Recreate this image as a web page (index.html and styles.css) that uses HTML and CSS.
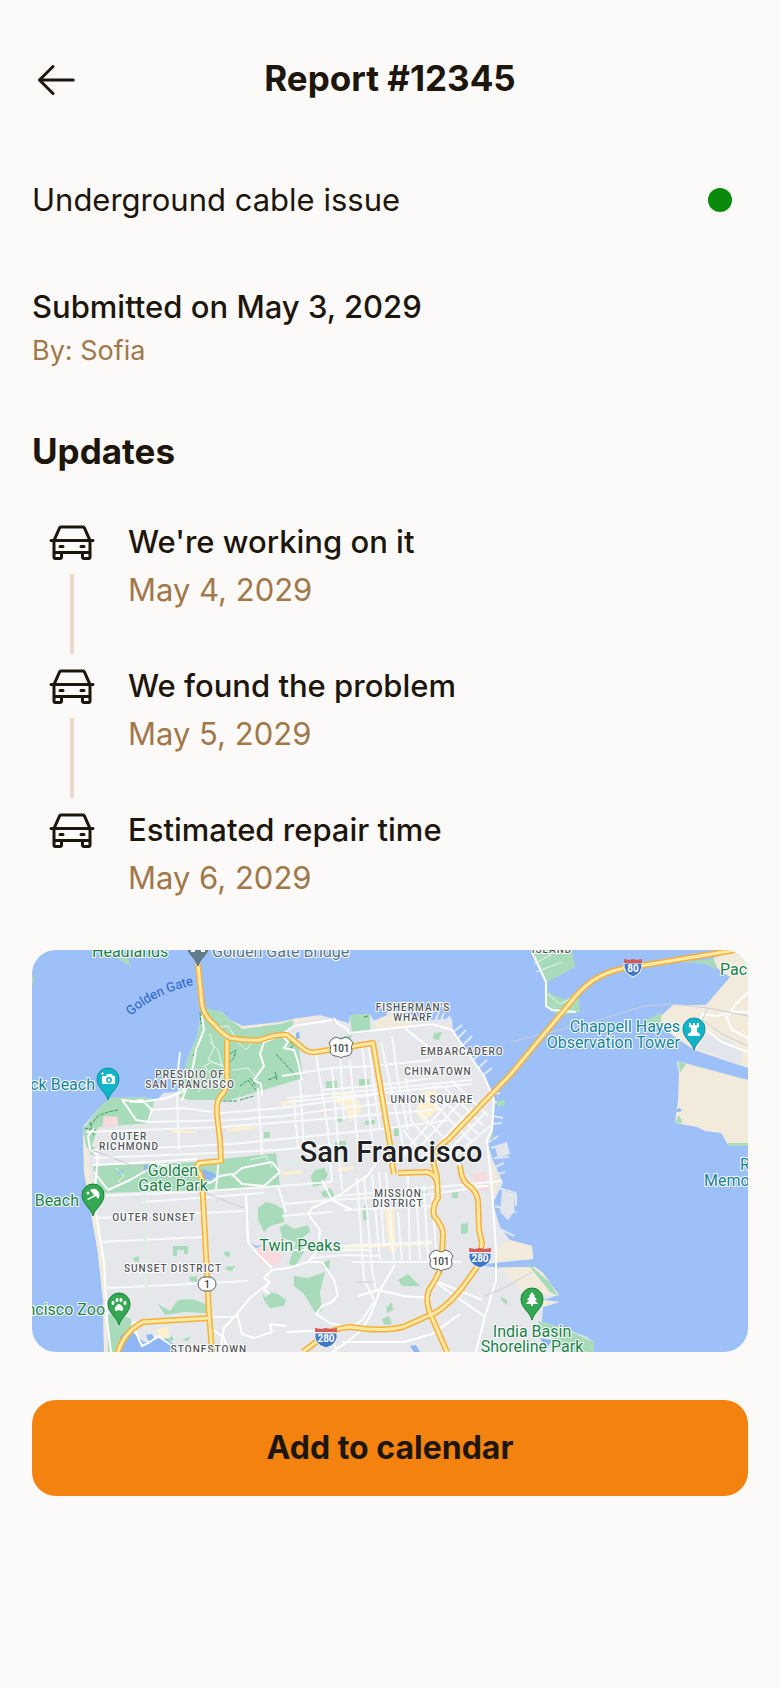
FILE: index.html
```html
<!DOCTYPE html>
<html lang="en">
<head>
<meta charset="utf-8">
<meta name="viewport" content="width=device-width, initial-scale=1">
<title>Report #12345</title>
<link rel="stylesheet" href="styles.css">
</head>
<body>
<svg class="sprite" aria-hidden="true">
  <symbol id="car" viewBox="0 0 256 256">
    <path d="M240,112H229.2L201.42,49.5A16,16,0,0,0,186.8,40H69.2a16,16,0,0,0-14.62,9.5L26.8,112H16a8,8,0,0,0,0,16h8v80a16,16,0,0,0,16,16H64a16,16,0,0,0,16-16V192h96v16a16,16,0,0,0,16,16h24a16,16,0,0,0,16-16V128h8a8,8,0,0,0,0-16ZM69.2,56H186.8l24.89,56H44.31ZM64,208H40V192H64Zm128,0V192h24v16Zm24-32H40V128H216ZM56,152a8,8,0,0,1,8-8H80a8,8,0,0,1,0,16H64A8,8,0,0,1,56,152Zm112,0a8,8,0,0,1,8-8h16a8,8,0,0,1,0,16H176A8,8,0,0,1,168,152Z"/>
  </symbol>
</svg>

<header class="topbar">
  <button class="back" type="button" aria-label="Back">
    <svg class="icon" viewBox="0 0 256 256" aria-hidden="true"><path class="arrow" d="M220 128H40M112 56 40 128l72 72"/></svg>
  </button>
  <h1 class="title">Report #12345</h1>
</header>

<main class="report">
  <section class="issue">
    <p class="lead">Underground cable issue</p>
    <span class="status" role="img" aria-label="Active"></span>
  </section>

  <section class="submitted">
    <p class="lead strong">Submitted on May 3, 2029</p>
    <p class="by">By: Sofia</p>
  </section>

  <h2 class="heading">Updates</h2>
  <ol class="timeline">
    <li class="step">
      <div class="rail"><svg class="icon" aria-hidden="true"><use href="#car"/></svg><span class="line"></span></div>
      <div class="detail"><p class="what">We're working on it</p><p class="when">May 4, 2029</p></div>
    </li>
    <li class="step">
      <div class="rail"><svg class="icon" aria-hidden="true"><use href="#car"/></svg><span class="line"></span></div>
      <div class="detail"><p class="what">We found the problem</p><p class="when">May 5, 2029</p></div>
    </li>
    <li class="step">
      <div class="rail"><svg class="icon" aria-hidden="true"><use href="#car"/></svg></div>
      <div class="detail"><p class="what">Estimated repair time</p><p class="when">May 6, 2029</p></div>
    </li>
  </ol>

  <svg class="map" viewBox="0 0 716 402" role="img" aria-label="Map of San Francisco">
    <rect class="water" width="716" height="402"/>

    <!-- Land -->
    <path class="land" d="M170 58 190 62 198 70 211 78 248 73 261 69 288 65 306 70 317 73 318 65 338 64 342 71 353 69 356 60 401 70 420 68 421 80 458 137 463 150 461 177 456 195 461 210 471 233 461 253 468 277 478 290 500 296 501 309 465 313 465 317 503 317 511 323 518 333 527 345 511 350 527 352 511 357 510 372 531 378 555 387 562 392V402H72L71 350 66 303 58 257 53 223 51 177 65 160 78 148 111 147 125 150 131 143 145 142 153 120 155 110 165 87Z"/>
    <path class="sand" d="M51 186 55 186 61 250 72 310 76 402H72L71 350 66 303 58 257 52 223ZM478 290 500 296 501 309 465 311 462 300ZM468 317H503L511 323 518 333 527 345 506 346 488 340ZM198 70 211 76 248 72 261 69 288 66 288 69 262 73 212 80 202 74ZM341 71 353 66 384 70 376 78 346 80ZM459 212 468 230 460 250 457 232ZM511 350 527 352 511 357Z"/>
    <path class="sand" d="M681 8 700 2 716 0V118L662 100 630 78 611 72 630 65 641 55 674 55 698 27 685 18ZM645 111 716 130V195H696L689 183 673 181 665 177 643 173 646 150 647 123Z"/>
    <path class="grey-land" d="M665 98 676 82 700 92 712 104 706 114Z"/>

    <!-- Piers -->
    <path class="pier" d="M403 72 407 62M408 72 412 63M414 72 418 66M421 82 430 75M425 89 434 80M430 96 440 86M435 104 446 95M440 111 450 102M446 118 455 110M451 125 460 118M462 144 468 143M462 152 470 153M461 166 471 168M460 174 470 173M457 192 466 186M459 198 472 194M462 208 477 207M463 217 472 213M462 225 473 222M466 238 484 243M484 243V256M472 245 474 262M477 246 478 262M463 256 484 262M470 280 482 286"/>
    <path class="grey-land" d="M463 197 475 192 478 204 466 208ZM470 240 483 244 482 262 476 270 468 262Z"/>
    <path class="inlet" d="M448 315 470 313 502 310V316L465 317ZM438 199 428 216"/>

    <!-- Parks -->
    <path class="park" d="M170 58 190 62 198 70 211 79 248 74 260 70 262 74 252 84 266 92 271 128 238 138 198 150 158 150 147 147 153 120 155 110 165 87ZM65 160 78 148 111 147 122 150 118 173 66 177 60 196 66 200 60 206 54 196 51 180ZM61 216 165 212 244 203 248 236 178 240 65 243ZM318 65 338 64V82L320 84ZM0 0H12L3 8 0 12ZM85 8 95 6 99 17ZM0 24 2 28V32L0 34ZM498 0H540L543 17 516 32ZM515 42 534 50 546 40 548 62 528 66 513 57ZM611 72 630 62 628 76ZM646 111 654 114 648 123ZM643 173 647 165 651 173ZM649 12 682 9 684 20 674 14ZM696 193H716V196H696ZM494 312 506 322 518 333 526 346 518 342ZM506 371 531 378 562 392V402H530L520 388 508 380ZM458 188 461 180 461 192ZM402 83 410 82 407 90 401 89ZM465 151 473 150 472 156 465 156Z"/>
    <path class="park" d="M294 131H305V138H294ZM327 129H337V137H327ZM305 166H310V172H305ZM333 171 343 170V174L333 175ZM232 182H238V188H232ZM303 192 314 191V196H303ZM362 178 367 178 367 186 362 186ZM308 87 320 85 318 90 308 91ZM283 220 292 218 296 224 291 234 281 237 279 226ZM289 242 298 238 302 244 301 248 291 247ZM226 258 234 252 242 254 251 259 252 272 238 276 232 282 226 270ZM248 277 254 274 262 279 276 275 278 282 270 288 272 302 262 318 257 313 264 292 250 288ZM262 326 276 328 293 322 288 342 290 360 284 364 272 344 262 336ZM292 312 298 310 297 319 291 318ZM335 259 336 250 331 258 331 270 335 270ZM420 243 426 242V248H420ZM429 274 436 273 436 283 429 284ZM390 241 395 241V245H390ZM366 330 376 324 386 334 388 336 370 336ZM354 358 360 352 361 360 355 363ZM350 369 357 366 360 374 352 375ZM468 347 475 350 475 355 470 351ZM141 296 156 296V304H152V300H145V306H141ZM192 302 198 301V307L193 306ZM193 317 203 316 200 321 195 320ZM101 308 107 306V312L102 311ZM157 327 165 326V332L158 331ZM126 354 138 361 146 350 160 349 174 354 176 363 152 362 133 365ZM76 364 98 368 102 380 90 398 84 402H76ZM150 390 159 386 156 391ZM130 390 140 386 142 390 130 394ZM238 342 246 344 254 350 252 356 238 358 232 350ZM230 344 238 350 234 354Z"/>
    <path class="pond" d="M170 219 180 222 185 226 178 230 170 228ZM112 216 116 214 116 220 112 220ZM88 386 98 380 112 392 120 392 130 386 146 397 138 402H88ZM114 385 120 384 124 392 118 394ZM217 292 224 296 230 295 224 298ZM264 83 267 82 268 88 264 89ZM378 396 384 395 388 402H382ZM84 220 92 222 88 224ZM508 388 520 390 514 400ZM644 160 648 158 650 161 645 162Z"/>
    <path class="pink" d="M72 166 86 167 86 176 70 176ZM222 300 234 294 250 306 246 316 228 312ZM438 224 454 222 456 242 448 240ZM424 236 430 228 434 234ZM315 126 319 125V130H315ZM288 160 296 158 295 164H288Z"/>
    <path class="commercial" d="M140 180 165 181V183H140ZM195 178 220 176 228 178 196 182ZM248 152 264 149 264 154 250 156ZM300 144 322 142 330 160 318 172 312 156 302 152ZM390 142 404 140 406 160 392 172 384 164ZM352 258 362 258 364 304 358 302ZM312 296 400 292V295L312 299ZM306 218 322 216V219L306 222ZM124 380 136 376 138 388 128 389ZM300 98 330 94V98L300 102ZM250 222 270 220V223L250 226ZM416 202 422 202V210H416Z"/>
    <path class="trail" d="M58 176 66 166 76 162 86 160M52 178 64 180M58 172 62 186M161 106 166 98M198 104 204 100 202 108 198 112M208 136 216 130 224 140M218 128 224 136M208 150 222 146M186 151 205 151M244 104 264 126M258 92 266 96M258 98 266 92M236 130 246 126M243 122 245 130M168 62 169 74M332 67 336 66"/>

    <!-- Streets -->
    <path class="street minor" d="M118 160 150 158 190 163 250 158 300 151 360 142 410 136M116 172 200 170 252 166 310 158 400 148M54 182 190 177 290 169 400 160M61 200 140 197 200 194 290 185 350 179 420 170M62 208 160 204 245 200 300 195M250 126 300 118 340 116 400 110M290 140 350 135 400 128M255 148 320 142 380 136 440 130M255 152 320 146 380 140 440 134M62 246 160 242 246 236 300 232M110 252 180 247 232 243M65 268 212 261M67 292 172 287M75 338 140 335 175 333 216 331M178 367 206 367M252 254 300 250 400 244 455 236M306 246 470 231M254 300 340 300M280 308 312 305 346 306M320 312H430M312 260 400 256M250 266 300 262M310 296 400 292"/>
    <path class="street minor" d="M145 142 147 200M226 138 230 205M268 130 272 200M284 104 296 180 300 232M262 152 266 198M308 103 312 170M300 118 305 180 310 240M318 110 326 200M330 94 340 190M336 93 348 180M349 92 360 142 372 200M360 86 366 130 376 180M374 128 380 176M325 228 332 330 342 350M332 226 340 320 344 340M340 224 348 310M347 222 352 296M354 222 362 310M376 226 378 310M384 236 388 310M392 236 396 310M400 246 404 300M366 262 370 310M148 102 146 120M246 236 254 262M184 240 187 206M214 243 216 293"/>
    <path class="street minor" d="M398 150 440 192M405 144 446 184M412 137 452 176M419 130 456 166M385 160 424 200M378 170 412 206M371 180 396 210M378 208 430 150M388 214 440 158M370 205 418 150M404 214 452 164M424 205 458 176M376 200 364 214"/>
    <path class="street" d="M62 178 56 186 58 200 66 205 62 250 72 312 75 370 79 402M61 215 120 212 165 209M98 152 110 150 120 160 116 172 104 170 96 158 90 150 110 152 135 148 150 142 152 138M230 146 229 134 222 130 232 116 228 104 232 92 250 85 256 92 252 98 262 100 266 112 270 130M318 83 400 74 420 80 452 126 462 150 460 180 455 190 460 240 464 300 464 330 452 370 444 402M302 68 306 74 314 78 318 83M250 84 262 76 300 70M371 77 390 92 406 104M347 210 335 226 306 246 280 258 276 264 288 280 286 300 276 312 256 318 240 320 232 328 238 332 218 348 205 364 192 378 188 402M214 243 216 292 226 304 240 318M276 312 290 312 302 330 306 345 300 352 290 356 284 364 298 373 320 378M238 332 232 340 238 344M363 315 348 340 340 362 330 380 312 394 300 402M326 346 346 340 372 346 400 348M400 330 452 366M406 332 450 350M316 380 330 370 342 352M205 364 210 384 222 388 240 382 238 374 254 376M254 382 300 380 304 402M310 392 372 392 400 384 428 364M320 260 300 250 290 230M62 222 76 240 98 230 112 222 126 214 165 220M158 238 180 232 188 226 200 224 210 234 232 236 248 222 240 212 210 218 200 226M182 380 192 388 196 402M104 372 100 374 110 396 118 392 126 386 146 400M428 216 416 202M456 236 430 236"/>
    <path class="street path" d="M112 238 114 320 116 380M252 214 290 208 312 204"/>
    <path class="street" d="M500 2 514 32 514 56 520 60 544 62M716 62 700 62 684 66 670 64 668 76 690 92 716 102M696 66 704 54 716 42M716 88 700 80 694 66"/>
    <path class="park-road" d="M178 84 182 98 176 110 190 116 186 100 178 92M196 118 180 112 172 116 184 130 194 126M200 120 216 118 226 130M206 92 214 100 222 90M182 78 196 76 204 88M166 142 182 128 194 134M502 14 520 4M504 22 530 12M516 44 528 54 540 48M84 218 92 226 86 232M218 210 234 206 240 218"/>
    <path class="rail-line" d="M478 92 560 72 612 56 640 54 676 58 716 66M676 58 670 70 690 84 716 96M452 346 472 338 500 322M60 200 212 258M324 332H342"/>
    <path class="street" d="M170 66 172 80 164 100 160 122 156 134 150 150"/>

    <!-- Highways -->
    <g class="casing">
      <path id="route-101-north" d="M166 14 170 55Q172 66 182 74 190 84 198 88 215 91 228 90 245 84 255 85L272 99Q276 103 284 102L341 93 359 200 361 216M366 223 395 222Q403 224 405 232M360 214 362 224"/>
      <path id="route-1" d="M195 90V130Q195 140 188 147 184 152 185 165L188 190 189 211 167 213Q163 218 168 224L170 230 175 323 177 363 180 402M178 368 111 372Q92 382 86 402"/>
      <path id="route-80" d="M710-2 698 1 601 17Q578 19 560 31 548 40 538 53L478 125 451 153 416 190Q400 200 402 215L405 227 406 248Q400 256 402 266 411 276 411 284L410 303 408 320Q404 330 397 340 393 350 398 363L415 402"/>
      <path id="route-280" d="M428 215Q429 230 436 235 444 240 446 250L447 280 450 293 445 317 430 338Q412 360 398 365L371 377Q350 382 318 377 300 378 288 389L271 402"/>
    </g>
    <g class="fill">
      <use href="#route-101-north"/>
      <use href="#route-1"/>
      <use href="#route-80"/>
      <use href="#route-280"/>
    </g>

    <!-- Route shields -->
    <g class="us-shield">
      <path id="us" d="M300 89 304 87 309 89 314 87 318 89 321 93Q318 97 320 100 320 105 315 106 311 106 309 108 307 106 303 106 298 105 298 100 300 97 297 93Z"/>
      <text x="309" y="102">101</text>
      <use href="#us" x="100" y="213"/>
      <text x="409" y="315">101</text>
      <rect x="166" y="327" width="18" height="14" rx="7"/>
      <text x="175" y="338">1</text>
    </g>
    <g class="interstate">
      <path class="blue" d="M592 13H610Q611 23 601 27 591 23 592 13Z"/><path class="red" d="M592 9 597 10 601 9 605 10 610 9V13H592Z"/>
      <text x="601" y="22">80</text>
      <path class="blue" d="M437 303H459Q461 314 448 318 435 314 437 303Z"/><path class="red" d="M437 298 443 299 448 298 453 299 459 298V302H437Z"/>
      <text x="448" y="312">280</text>
      <path class="blue" d="M283 383H305Q307 394 294 398 281 394 283 383Z"/><path class="red" d="M283 378 289 379 294 378 299 379 305 378V382H283Z"/>
      <text x="294" y="392">280</text>
    </g>

    <!-- Pins -->
    <g class="pins">
      <g transform="translate(166 -5)"><path class="pin bridge" d="M0 21C-2 13-11 9-11 0A11 11 0 0 1 11 0C11 9 2 13 0 21Z"/><path class="glyph" d="M-7 3V7H-3V3ZM3 3V7H7V3Z"/></g>
      <g transform="translate(76 129)"><path class="pin teal" d="M0 21C-2 13-11 9-11 0A11 11 0 0 1 11 0C11 9 2 13 0 21Z"/><path class="glyph" fill-rule="evenodd" d="M-6-3H-2L-1-5H4L5-3H7V5H-6ZM1-2A3 3 0 1 0 1 4 3 3 0 1 0 1-2ZM-6-7V-6H-7V-5H-6V-4H-5V-5H-4V-6H-5V-7Z"/><circle class="glyph" cx="1" cy="1" r="1.500"/></g>
      <g transform="translate(662 79)"><path class="pin teal" d="M0 21C-2 13-11 9-11 0A11 11 0 0 1 11 0C11 9 2 13 0 21Z"/><path class="glyph" d="M-5-6H-3V-4H-1V-6H1V-4H3V-6H5V-2L3-1V3L6 5V7H-6V5L-3 3V-1L-5-2Z"/></g>
      <g transform="translate(61 245)"><path class="pin green" d="M0 21C-2 13-11 9-11 0A11 11 0 0 1 11 0C11 9 2 13 0 21Z"/><path class="glyph" d="M-3-5Q2-8 5-4 8 0 5 4L3 1-5 5-6 4 1 0Z"/><circle class="glyph" cx="-5" cy="-2" r="1.500"/></g>
      <g transform="translate(87 354)"><path class="pin green" d="M0 21C-2 13-11 9-11 0A11 11 0 0 1 11 0C11 9 2 13 0 21Z"/><path class="glyph" d="M0 0C2 0 5 4 4 6 3 8 1 6 0 6S-3 8-4 6C-5 4-2 0 0 0Z"/><ellipse class="glyph" cx="-2" cy="-4" rx="1.500" ry="2"/><ellipse class="glyph" cx="2" cy="-4" rx="1.500" ry="2"/><ellipse class="glyph" cx="-6" cy="-1" rx="1.500" ry="2"/><ellipse class="glyph" cx="6" cy="-1" rx="1.500" ry="2"/></g>
      <g transform="translate(500 349)"><path class="pin green" d="M0 21C-2 13-11 9-11 0A11 11 0 0 1 11 0C11 9 2 13 0 21Z"/><path class="glyph" d="M0-7 3-3H2L5 1H3L6 5H1V7H-1V5H-6L-3 1H-5L-2-3H-3Z"/></g>
    </g>

    <!-- Labels -->
    <g class="place">
      <text x="158" y="128">PRESIDIO OF</text><text x="158" y="138">SAN FRANCISCO</text>
      <text x="97" y="190">OUTER</text><text x="97" y="200">RICHMOND</text>
      <text x="381" y="61">FISHERMAN'S</text><text x="381" y="71">WHARF</text>
      <text x="430" y="105">EMBARCADERO</text>
      <text x="406" y="125">CHINATOWN</text>
      <text x="400" y="153">UNION SQUARE</text>
      <text x="366" y="247">MISSION</text><text x="366" y="257">DISTRICT</text>
      <text x="122" y="271">OUTER SUNSET</text>
      <text x="141" y="322">SUNSET DISTRICT</text>
      <text x="177" y="403">STONESTOWN</text>
      <text x="520" y="3">ISLAND</text>
    </g>
    <g class="poi green-text">
      <text x="60" y="7">Headlands</text>
      <text x="141" y="226" text-anchor="middle">Golden</text><text x="141" y="241" text-anchor="middle">Gate Park</text>
      <text x="47" y="256" text-anchor="end">Beach</text>
      <text x="73" y="365" text-anchor="end">ncisco Zoo</text>
      <text x="268" y="301" text-anchor="middle">Twin Peaks</text>
      <text x="500" y="387" text-anchor="middle">India Basin</text><text x="500" y="402" text-anchor="middle">Shoreline Park</text>
      <text x="688" y="25">Pac</text>
    </g>
    <g class="poi teal-text">
      <text x="63" y="140" text-anchor="end">ck Beach</text>
      <text x="648" y="82" text-anchor="end">Chappell Hayes</text><text x="648" y="98" text-anchor="end">Observation Tower</text>
      <text x="708" y="220">R</text><text x="672" y="236">Memo</text>
    </g>
    <g class="poi slate-text"><text x="180" y="7">Golden Gate Bridge</text></g>
    <path id="strait" fill="none" d="M99 66Q122 43 170 33"/>
    <text class="strait"><textPath href="#strait">Golden Gate</textPath></text>
    <text class="city" x="359" y="212">San Francisco</text>
  </svg>

  <button class="primary" type="button">Add to calendar</button>
</main>
</body>
</html>
```
FILE: styles.css
```css
* { box-sizing: border-box; margin: 0; padding: 0; }

body {
  min-height: 100vh;
  background: #fcfaf8;
  color: #1c160c;
  font-family: Inter, "Liberation Sans", sans-serif;
  font-size: 31px;
  line-height: 48px;
}

.sprite { position: absolute; width: 0; height: 0; }
.icon { display: block; width: 48px; height: 48px; fill: currentColor; }
.arrow { fill: none; stroke: currentColor; stroke-width: 16; stroke-linecap: round; stroke-linejoin: round; }

.topbar {
  display: grid;
  grid-template-columns: 48px 1fr 48px;
  align-items: center;
  padding: 56px 32px 16px;
}
.back { border: 0; background: none; color: inherit; cursor: pointer; }
.title { padding-bottom: 4px; font-size: 35px; line-height: 44px; font-weight: 700; text-align: center; }

.report { padding: 0 32px 64px; }
.issue { display: flex; align-items: center; justify-content: space-between; padding: 56px 16px 56px 0; }
.status { width: 24px; height: 24px; border-radius: 50%; background: #088a0b; }
.strong { font-weight: 500; }
.submitted { padding-top: 3px; }
.by { color: #a0784a; font-size: 27px; line-height: 40px; }

.heading { padding: 58px 0 45px; font-size: 35px; line-height: 44px; font-weight: 700; }
.timeline { list-style: none; }
.step { display: grid; grid-template-columns: 80px 1fr; gap: 16px; }
.rail { display: flex; flex-direction: column; align-items: center; gap: 8px; padding-bottom: 8px; }
.line { width: 4px; height: 80px; background: #e9dccd; }
.what { font-weight: 500; }
.when { color: #a0784a; }

.map {
  display: block;
  width: 100%;
  height: auto;
  margin: 48px 0;
  border-radius: 24px;
  font-family: Roboto, "Liberation Sans", sans-serif;
}

.primary {
  display: block;
  width: 100%;
  padding: 24px;
  border: 0;
  border-radius: 24px;
  background: #f3820f;
  color: #1c160c;
  font: inherit;
  font-size: 32px;
  font-weight: 700;
  cursor: pointer;
}

/* Map */
.water { fill: #9dc0f9; }
.land { fill: #e5e7eb; }
.grey-land { fill: #e2e5ec; }
.sand { fill: #f2eadb; }
.park { fill: #a8dbb9; }
.pond { fill: #8fb7f5; }
.pink { fill: #f6dadd; }
.commercial { fill: #fbf1d0; }
.pier { fill: none; stroke: #dfe7f3; stroke-width: 2; }
.inlet { fill: #9dc0f9; stroke: #9dc0f9; stroke-width: 1; }
.trail { fill: none; stroke: #3f9a62; stroke-width: 1; stroke-dasharray: 4 1; }
.street { fill: none; stroke: #fff; stroke-width: 2; stroke-linejoin: round; }
.street.minor { stroke: #f8f9fb; }
.street.path { stroke: #d9f0e0; }
.park-road { fill: none; stroke: #e6f6ea; stroke-width: 1; stroke-linejoin: round; }
.rail-line { fill: none; stroke: #c9ced6; stroke-width: 1; }
.casing, .fill { fill: none; stroke: #f5b03a; stroke-width: 6; stroke-linejoin: round; }
.fill { stroke: #ffe9a6; stroke-width: 3; }

.us-shield path, .us-shield rect, .us-shield use { fill: #fff; stroke: #5f6368; stroke-width: 1; }
.us-shield text { fill: #3c4043; font-size: 10px; font-weight: 500; text-anchor: middle; }
.blue { fill: #3f78c9; stroke: #fff; stroke-width: 1; }
.red { fill: #d65a56; }
.interstate text { fill: #fff; font-size: 10px; font-weight: 700; text-anchor: middle; }

.pin { stroke-width: 1; }
.pin.teal { fill: #12b5c8; stroke: #0b8fa1; }
.pin.green { fill: #34a853; stroke: #16803a; }
.pin.bridge { fill: #607d8b; stroke: #546e7a; }
.glyph { fill: #fff; }

.place text, .poi text, .city { stroke: #fff; stroke-width: 2; stroke-linejoin: round; paint-order: stroke; }
.place text { fill: #55585d; font-size: 10px; font-weight: 500; letter-spacing: 1px; text-anchor: middle; }
.poi text { font-size: 16px; }
.green-text { fill: #188048; }
.teal-text { fill: #12829a; }
.slate-text { fill: #55748c; }
.strait { fill: #2962c8; font-size: 13px; }
.city { fill: #202124; font-size: 29px; font-weight: 500; text-anchor: middle; }
```
